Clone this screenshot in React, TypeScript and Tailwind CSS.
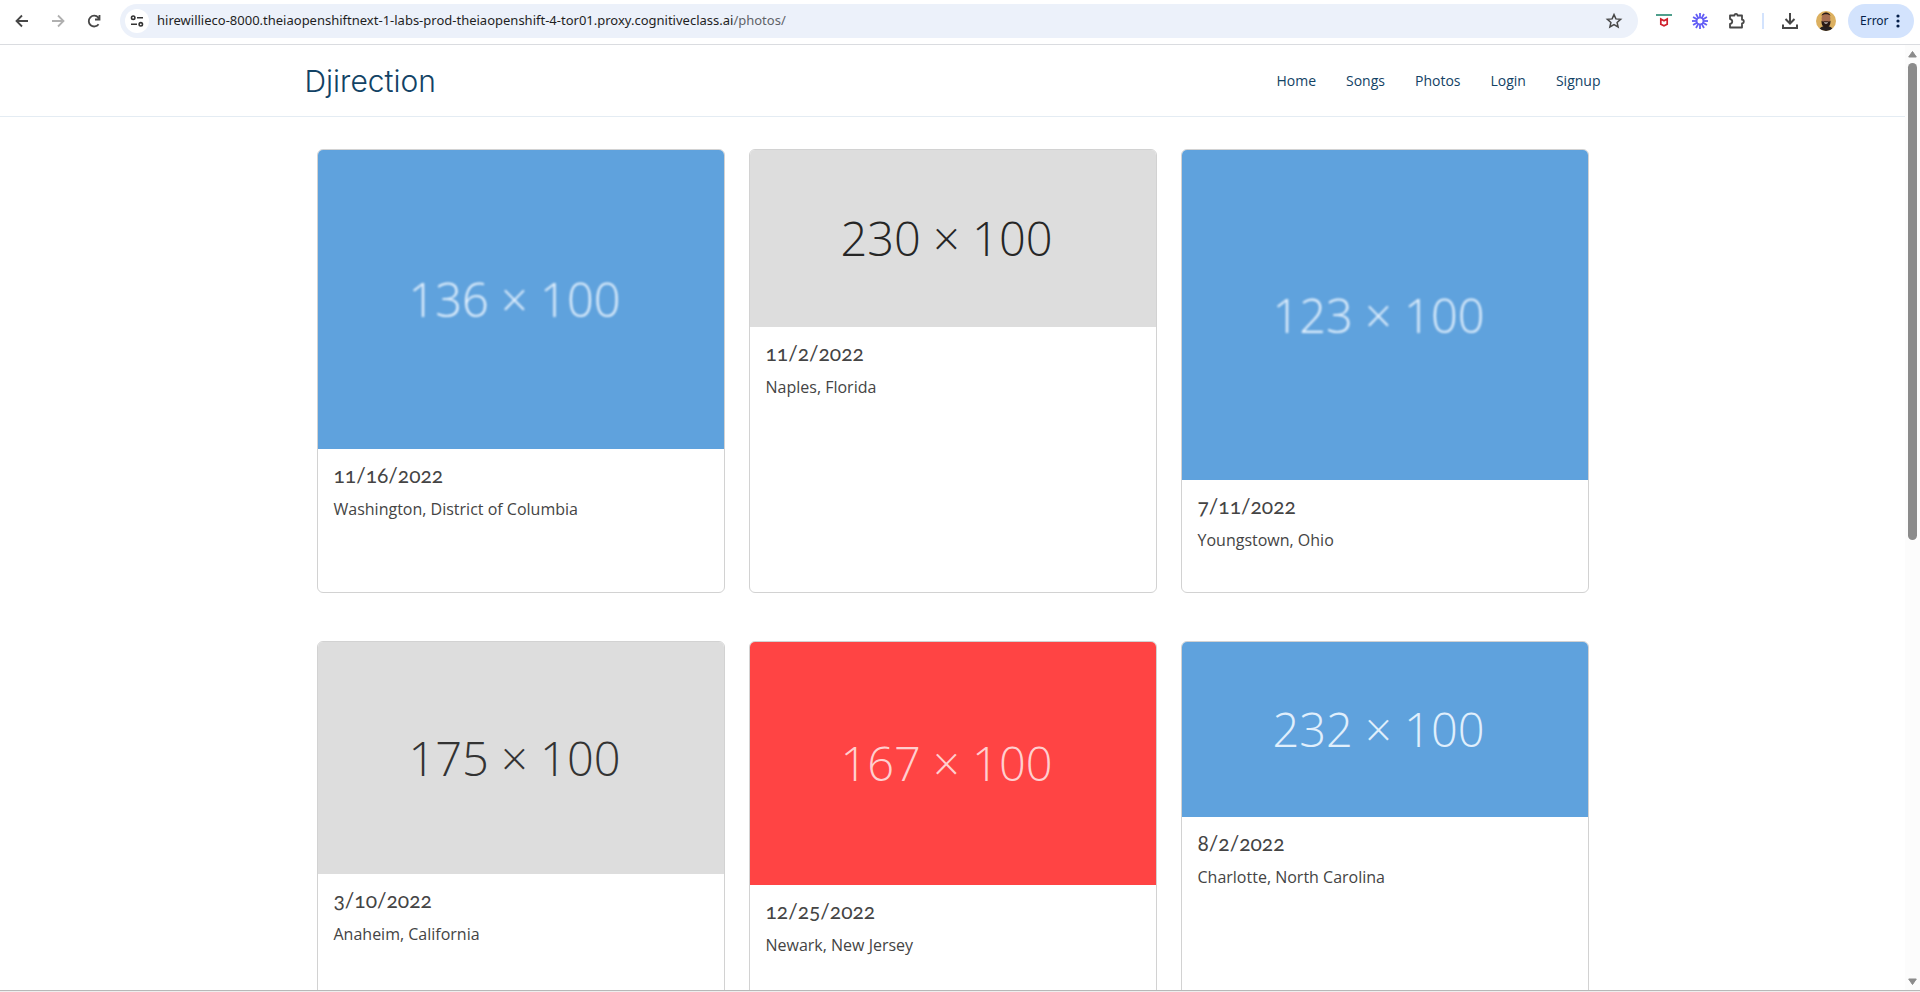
import React from 'react';

type Photo = {
  width: number;
  date: string;
  place: string;
  ratio: string;
  color: string;
  text: string;
};

const SOFT = 'blur-[1px]';
const SHARP = 'blur-none';

const photos: Photo[] = [
  { width: 136, date: '11/16/2022', place: 'Washington, District of Columbia', ratio: 'aspect-[136/100]', color: 'bg-[#5fa2dd] text-[#e4f1fd]', text: SOFT },
  { width: 230, date: '11/2/2022', place: 'Naples, Florida', ratio: 'aspect-[230/100]', color: 'bg-[#dddddd] text-[#262626]', text: SHARP },
  { width: 123, date: '7/11/2022', place: 'Youngstown, Ohio', ratio: 'aspect-[123/100]', color: 'bg-[#5fa2dd] text-[#e4f1fd]', text: SOFT },
  { width: 175, date: '3/10/2022', place: 'Anaheim, California', ratio: 'aspect-[175/100]', color: 'bg-[#dddddd] text-[#333333]', text: SHARP },
  { width: 167, date: '12/25/2022', place: 'Newark, New Jersey', ratio: 'aspect-[167/100]', color: 'bg-[#ff4444] text-[#ffcfcf]', text: SHARP },
  { width: 232, date: '8/2/2022', place: 'Charlotte, North Carolina', ratio: 'aspect-[232/100]', color: 'bg-[#5fa2dd] text-[#e0effc]', text: SHARP },
];

const links = ['Home', 'Songs', 'Photos', 'Login', 'Signup'];

function ToolButton({ label, children }: { label: string; children: React.ReactNode }) {
  return (
    <button type="button" aria-label={label} className="flex h-9 w-9 shrink-0 items-center justify-center text-[#474747]">
      {children}
    </button>
  );
}

function Stroke({ size, width = 2, children }: { size: number; width?: number; children: React.ReactNode }) {
  return (
    <svg width={size} height={size} viewBox="0 0 20 20" fill="none" stroke="currentColor" strokeWidth={width} aria-hidden="true">
      {children}
    </svg>
  );
}

function BrowserBar() {
  return (
    <div className="flex h-[45px] shrink-0 items-center border-b border-[#dadce0] bg-white pr-1.5 pb-0.5 pl-1">
      <ToolButton label="Back">
        <Stroke size={20} width={1.8}>
          <path d="M16 10H5M10 4.5 4.5 10l5.500 5.500" />
        </Stroke>
      </ToolButton>
      <button type="button" aria-label="Forward" disabled className="flex h-9 w-9 shrink-0 items-center justify-center text-[#b0b0b0]">
        <Stroke size={20} width={1.8}>
          <path d="M4 10h11M10 4.500 15.500 10 10 15.500" />
        </Stroke>
      </button>
      <ToolButton label="Reload">
        <Stroke size={20} width={1.8}>
          <path d="M14.600 13.200A5.400 5.400 0 1 1 14.300 6.600L15.400 8M15.500 4v4.500H11" />
        </Stroke>
      </ToolButton>

      <div className="mx-2 flex h-[34px] min-w-0 flex-1 items-center rounded-full bg-[#ecf1fa] pr-3.5 pl-[5px] font-['Noto_Sans',sans-serif] text-[13px]">
        <button type="button" aria-label="View site information" className="mr-2 flex h-6 w-6 shrink-0 items-center justify-center rounded-full bg-white text-[#333333]">
          <svg width="14" height="14" viewBox="0 0 14 14" fill="none" stroke="currentColor" strokeWidth="1.6" aria-hidden="true">
            <circle cx="3.200" cy="3.700" r="1.700" />
            <path d="M7 3.700h6M1 10.300h6" />
            <circle cx="10.800" cy="10.300" r="1.700" />
          </svg>
        </button>
        <input
          aria-label="Address"
          readOnly
          value="hirewillieco-8000.theiaopenshiftnext-1-labs-prod-theiaopenshift-4-tor01.proxy.cognitiveclass.ai"
          className="field-sizing-content min-w-0 text-[#1f1f1f] outline-none"
        />
        <span className="flex-1 text-[#5f6368]">/photos/</span>
        <button type="button" aria-label="Bookmark this page" className="text-[#474747]">
          <Stroke size={20} width={1.500}>
            <path d="m10 3.600 1.900 4.300 4.700.4-3.500 3.100 1 4.600-4.100-2.400L5.900 16l1-4.600-3.500-3.100 4.700-.4z" />
          </Stroke>
        </button>
      </div>

      <ToolButton label="McAfee WebAdvisor">
        <svg width="16" height="16" viewBox="0 0 16 16" aria-hidden="true">
          <path d="M0 1h16v2H0z" fill="#4f9f8c" />
          <path d="M4.800 6 8 7.800 11.200 6v5.200L8 12.800l-3.200-1.600z" fill="none" stroke="#d0202c" strokeWidth="1.700" />
        </svg>
      </ToolButton>
      <ToolButton label="Loom">
        <svg width="16" height="16" viewBox="0 0 16 16" fill="none" stroke="#625df5" strokeWidth="1.800" aria-hidden="true">
          {[0, 30, 60, 90, 120, 150, 180, 210, 240, 270, 300, 330].map((a) => (
            <path key={a} d="M8 0v5.200" transform={`rotate(${a} 8 8)`} />
          ))}
          <circle cx="8" cy="8" r="3.300" strokeWidth="1.200" />
        </svg>
      </ToolButton>
      <ToolButton label="Extensions">
        <Stroke size={20} width={1.800}>
          <path strokeLinejoin="round" d="M4 4.500h4.500C8.500 2.300 11.500 2.300 11.500 4.500H16v4.200c2.400.2 2.400 3.400 0 3.600v4.200H4v-3.600c3-.4 3-4.400 0-4.800z" />
        </Stroke>
      </ToolButton>
      <div className="mx-2 h-4 w-0.5 shrink-0 bg-[#d3e3fd]" />
      <ToolButton label="Downloads">
        <Stroke size={20} width={2}>
          <path d="M10 2v10M5.500 8 10 12.500 14.500 8M3 13.500V17h14v-3.500" />
        </Stroke>
      </ToolButton>
      <ToolButton label="Profile">
        <svg width="20" height="20" viewBox="0 0 20 20" aria-hidden="true">
          <defs>
            <clipPath id="avatar"><circle cx="10" cy="10" r="10" /></clipPath>
          </defs>
          <g clipPath="url(#avatar)">
            <path d="M0 0h20v20H0z" fill="#dcb060" />
            <path d="M3 20c0-3.500 3-5 7-5s7 1.500 7 5z" fill="#262022" />
            <ellipse cx="10" cy="7.500" rx="4.400" ry="6" fill="#a86e52" />
            <path d="M5.500 5C6 .3 14 .3 14.500 5 13 2.800 7 2.800 5.500 5z" fill="#2a1a16" />
            <path d="M5.500 9.500c1 1.500 2.500.8 4.500.8s3.500.7 4.500-.8c.3 4.500-1.700 6.900-4.500 6.900s-4.800-2.400-4.500-6.900z" fill="#2a1a16" />
            <path d="M7.800 11.500h4.400c-.6 1.500-3.800 1.500-4.400 0z" fill="#f5ece6" />
          </g>
        </svg>
      </ToolButton>
      <button
        type="button"
        className="ml-1 flex h-[34px] w-[66px] shrink-0 items-center justify-between rounded-full bg-[#d3e3fd] pr-3.5 pl-3 font-['Noto_Sans',sans-serif] text-xs text-[#041e49]"
      >
        Error
        <svg width="4" height="16" viewBox="0 0 4 16" fill="currentColor" aria-hidden="true">
          <circle cx="2" cy="3" r="1.600" />
          <circle cx="2" cy="8" r="1.600" />
          <circle cx="2" cy="13" r="1.600" />
        </svg>
      </button>
    </div>
  );
}

function Scrollbar() {
  return (
    <div aria-hidden="true" className="flex w-[15px] shrink-0 flex-col items-center bg-[#fcfcfc] pt-[5px] pb-1">
      <svg width="9" height="8" viewBox="0 0 9 8" fill="#8b8b8b" stroke="#8b8b8b" strokeLinejoin="round">
        <path d="M4.500 1.500 8.300 7H.7z" />
      </svg>
      <div className="mt-[5px] h-[51%] w-[9px] rounded-full bg-[#8b8b8b]" />
      <svg className="mt-auto" width="9" height="8" viewBox="0 0 9 8" fill="#8b8b8b" stroke="#8b8b8b" strokeLinejoin="round">
        <path d="M4.500 6.500.7 1h7.600z" />
      </svg>
    </div>
  );
}

function PhotoCard({ photo }: { photo: Photo }) {
  return (
    <article className="overflow-hidden rounded-md border border-[#d2d2d2] bg-white">
      <div className={`flex w-full items-center justify-center pr-3 text-[47px] font-light ${photo.ratio} ${photo.color}`}>
        <span className={photo.text}>{photo.width} × 100</span>
      </div>
      <div className="px-4 pt-3.5 pb-10">
        <h5 className="mb-2.5 font-['Lato',sans-serif] text-[21px]/6 font-normal oldstyle-nums">{photo.date}</h5>
        <p className="text-base/6">{photo.place}</p>
      </div>
    </article>
  );
}

export default function App() {
  return (
    <div className="flex h-screen flex-col overflow-hidden bg-[#eeeeee] pb-px font-['Open_Sans',sans-serif] text-[#444444]">
      <BrowserBar />
      <div className="flex min-h-0 flex-1 border-b border-[#b8b8b8] bg-white">
        <div className="min-w-0 flex-1 overflow-hidden">
          <header className="border-b border-[#e4ecf3]">
            <div className="mx-auto flex h-[71px] max-w-[1320px] items-center justify-between px-3 text-[#124265]">
              <h1 className="font-['Inter',sans-serif] text-3xl font-light">
                <a href="#home">Djirection</a>
              </h1>
              <nav>
                <ul className="flex gap-[30px] text-sm">
                  {links.map((link) => (
                    <li key={link}>
                      <a href={`#${link.toLowerCase()}`}>{link}</a>
                    </li>
                  ))}
                </ul>
              </nav>
            </div>
          </header>
          <main className="mx-auto grid max-w-[1320px] grid-cols-3 gap-x-6 gap-y-12 px-6 py-8">
            {photos.map((photo) => (
              <PhotoCard key={photo.date} photo={photo} />
            ))}
          </main>
        </div>
        <Scrollbar />
      </div>
    </div>
  );
}
